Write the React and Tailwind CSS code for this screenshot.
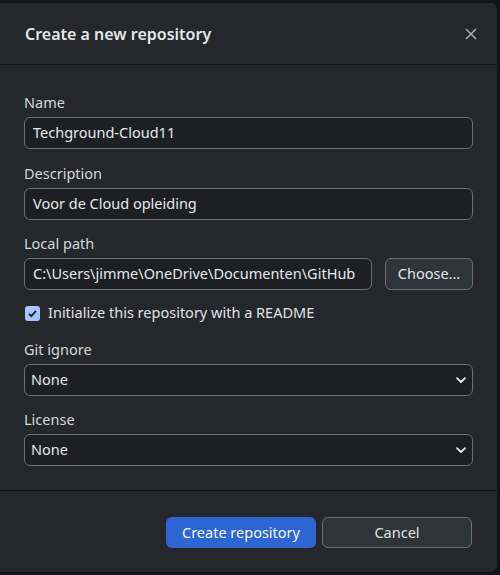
// Dialoog "Create a new repository" in de donkere GitHub Desktop-stijl.
const FONT = { fontFamily: '"Segoe UI", "Noto Sans", "Open Sans", sans-serif' }

function Label({ children }) {
  return <div className="mb-[5px] text-[14.5px] leading-[20px] text-[#d5d7da]">{children}</div>
}

function TextInput({ value, className = '' }) {
  return (
    <div
      className={`flex h-[32px] items-center rounded-[6px] border border-[#6b6f76] bg-[#1d1f23] px-[8px] text-[14.5px] text-[#e6e8ea] ${className}`}
    >
      {value}
    </div>
  )
}

function Select({ value }) {
  return (
    <div className="flex h-[32px] items-center justify-between rounded-[6px] border border-[#6b6f76] bg-[#1d1f23] pl-[6px] pr-[4px] text-[14.5px] text-[#e6e8ea]">
      <span>{value}</span>
      <svg width="14" height="14" viewBox="0 0 14 14" fill="none">
        <path d="M3 5.2l4 3.8 4-3.8" stroke="#e6e8ea" strokeWidth="1.8" strokeLinecap="round" strokeLinejoin="round" />
      </svg>
    </div>
  )
}

export default function App() {
  return (
    <div className="h-[575px] w-[500px] bg-[#131417] pt-[3px]" style={FONT}>
      <div className="flex h-[569px] w-[497px] flex-col rounded-r-[7px] bg-[#25272c]">
        {/* kop */}
        <div className="flex h-[62px] items-center justify-between border-b border-[#111215] pl-[25px] pr-[19px]">
          <h1 className="text-[16px] font-semibold text-[#e4e6e9]">Create a new repository</h1>
          <svg width="14" height="14" viewBox="0 0 14 14">
            <path d="M2 2l10 10M12 2L2 12" stroke="#a6a9ae" strokeWidth="1.6" />
          </svg>
        </div>

        {/* velden */}
        <div className="flex flex-1 flex-col px-[24px] pt-[27px]">
          <Label>Name</Label>
          <TextInput value="Techground-Cloud11" />

          <div className="mt-[14px]">
            <Label>Description</Label>
            <TextInput value="Voor de Cloud opleiding" />
          </div>

          <div className="mt-[13px]">
            <Label>Local path</Label>
            <div className="flex gap-[13px]">
              <TextInput value="C:\Users\jimme\OneDrive\Documenten\GitHub" className="flex-1" />
              <button className="h-[32px] w-[88px] rounded-[6px] border border-[#6b6f76] bg-[#2f343b] text-[14.5px] text-[#e4e6e9]">
                Choose...
              </button>
            </div>
          </div>

          <label className="mt-[13px] flex h-[20px] items-center gap-[8px] pl-[1px] text-[14.5px] text-[#e0e2e5]">
            <span className="flex h-[15px] w-[15px] items-center justify-center rounded-[3px] bg-[#a4c6fb]">
              <svg width="11" height="11" viewBox="0 0 11 11">
                <path d="M2 5.8l2.3 2.4L9 2.8" fill="none" stroke="#1d1f23" strokeWidth="1.8" />
              </svg>
            </span>
            Initialize this repository with a README
          </label>

          <div className="mt-[16px]">
            <Label>Git ignore</Label>
            <Select value="None" />
          </div>

          <div className="mt-[13px]">
            <Label>License</Label>
            <Select value="None" />
          </div>
        </div>

        {/* voet */}
        <div className="flex h-[82px] items-start justify-end gap-[6px] border-t border-[#111215] pr-[25px] pt-[26px]">
          <button className="h-[31px] w-[150px] rounded-[6px] bg-[#2d66d2] text-[14.5px] text-[#f2f5fa]">
            Create repository
          </button>
          <button className="h-[31px] w-[150px] rounded-[6px] border border-[#6b6f76] bg-[#2f343b] text-[14.5px] text-[#e0e2e5]">
            Cancel
          </button>
        </div>
      </div>
    </div>
  )
}
